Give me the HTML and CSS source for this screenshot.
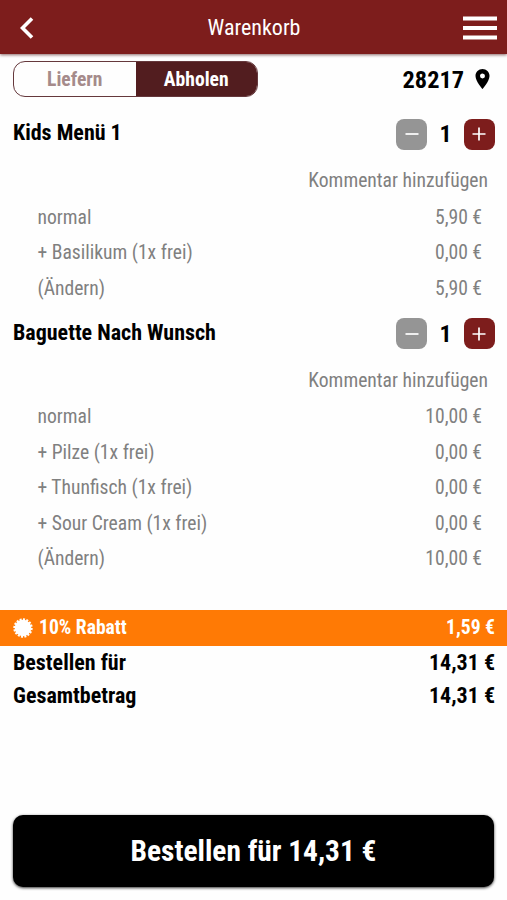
FILE: index.html
```html
<!DOCTYPE html>
<html lang="de">
<head>
    <meta charset="UTF-8">
    <meta name="viewport" content="width=device-width, initial-scale=1">
    <title>Warenkorb</title>
    <link rel="stylesheet" href="styles.css">
</head>
<body>

<!-- Header -->
<header class="header">
    <svg class="back-icon" viewBox="0 0 14 22"><path d="M12 1.500 2.500 11l9.500 9.500"/></svg>
    <h1><span class="text">Warenkorb</span></h1>
    <svg class="menu-icon" viewBox="0 0 34 24"><path d="M0 2.500h34M0 12h34M0 21.500h34"/></svg>
</header>

<!-- Delivery options -->
<div class="options">
    <div class="toggle">
        <div class="toggle-item"><span class="text">Liefern</span></div>
        <div class="toggle-item active"><span class="text">Abholen</span></div>
    </div>
    <div class="location">
        <span class="text">28217</span>
        <svg class="pin-icon" viewBox="5 2 14 20"><path d="M12 2C8.130 2 5 5.130 5 9c0 5.250 7 13 7 13s7-7.750 7-13c0-3.870-3.130-7-7-7zm0 9.500a2.500 2.500 0 0 1 0-5 2.500 2.500 0 0 1 0 5z"/></svg>
    </div>
</div>

<!-- Cart -->
<main class="cart">
    <section class="item">
        <div class="item-head">
            <h2><span class="text">Kids Menü 1</span></h2>
            <div class="counter">
                <div class="button minus"><svg viewBox="0 0 14 14"><path d="M0.500 7h13"/></svg></div>
                <span class="text count">1</span>
                <div class="button plus"><svg viewBox="0 0 14 14"><path d="M0.500 7h13M7 0.500v13"/></svg></div>
            </div>
        </div>
        <div class="comment"><span class="text">Kommentar hinzufügen</span></div>
        <div class="row"><span class="text">normal</span><span class="text">5,90 €</span></div>
        <div class="row"><span class="text">+ Basilikum (1x frei)</span><span class="text">0,00 €</span></div>
        <div class="row"><span class="text">(Ändern)</span><span class="text">5,90 €</span></div>
    </section>

    <section class="item">
        <div class="item-head">
            <h2><span class="text">Baguette Nach Wunsch</span></h2>
            <div class="counter">
                <div class="button minus"><svg viewBox="0 0 14 14"><path d="M0.500 7h13"/></svg></div>
                <span class="text count">1</span>
                <div class="button plus"><svg viewBox="0 0 14 14"><path d="M0.500 7h13M7 0.500v13"/></svg></div>
            </div>
        </div>
        <div class="comment"><span class="text">Kommentar hinzufügen</span></div>
        <div class="row"><span class="text">normal</span><span class="text">10,00 €</span></div>
        <div class="row"><span class="text">+ Pilze (1x frei)</span><span class="text">0,00 €</span></div>
        <div class="row"><span class="text">+ Thunfisch (1x frei)</span><span class="text">0,00 €</span></div>
        <div class="row"><span class="text">+ Sour Cream (1x frei)</span><span class="text">0,00 €</span></div>
        <div class="row"><span class="text">(Ändern)</span><span class="text">10,00 €</span></div>
    </section>
</main>

<!-- Totals -->
<div class="discount">
    <svg class="badge-icon" viewBox="0 0 20 20"><circle cx="10" cy="10" r="8.300"/><circle class="teeth" cx="10" cy="10" r="8.500" pathLength="32"/></svg>
    <span class="text">10% Rabatt</span>
    <span class="text amount">1,59 €</span>
</div>
<div class="total"><span class="text">Bestellen für</span><span class="text">14,31 €</span></div>
<div class="total"><span class="text">Gesamtbetrag</span><span class="text">14,31 €</span></div>

<div class="order-button"><span class="text">Bestellen für 14,31 €</span></div>

</body>
</html>
```
FILE: styles.css
```css
* {
    box-sizing: border-box;
}

body {
    margin: 0;
    height: 900px;
    display: flex;
    flex-direction: column;
    font-family: 'Roboto Condensed', Roboto, sans-serif;
    font-stretch: 75%;
    background: #fefefe;
    color: #000;
    overflow: hidden;
}

h1, h2 {
    margin: 0;
}

.text {
    white-space: nowrap;
}

/* Header */
.header {
    height: 54px;
    flex-shrink: 0;
    padding: 1px 10px 0 20px;
    display: grid;
    grid-template-columns: 34px 1fr 34px;
    align-items: center;
    background: #7d1d1c;
    color: #fff;
    box-shadow: 0 1px 3px rgba(60, 0, 0, 0.6);
}

.header h1 {
    padding-right: 9px;
    font-size: 22px;
    font-weight: 400;
    text-align: center;
}

.back-icon, .menu-icon {
    fill: none;
    stroke: #fff;
}

.back-icon {
    width: 14px;
    height: 22px;
    stroke-width: 3.6;
}

.menu-icon {
    width: 34px;
    height: 24px;
    stroke-width: 4;
}

/* Delivery options */
.options {
    height: 52.5px;
    flex-shrink: 0;
    padding: 7px 13px 0;
    display: flex;
    justify-content: space-between;
    align-items: flex-start;
}

.toggle {
    width: 245px;
    height: 36px;
    display: flex;
    border: 1px solid #65383c;
    border-radius: 12px;
    overflow: hidden;
}

.toggle-item {
    flex: 1;
    display: flex;
    justify-content: center;
    align-items: center;
    font-size: 19.6px;
    font-weight: 700;
    color: #a58b8b;
}

.toggle-item.active {
    background: #521d1f;
    color: #fff;
}

.location {
    height: 36px;
    padding-right: 4px;
    display: flex;
    align-items: center;
    gap: 11px;
    font-size: 24.3px;
    font-weight: 700;
}

.pin-icon {
    width: 15px;
    height: 20px;
}

/* Cart items */
.cart {
    height: 503px;
    flex-shrink: 0;
}

.item-head {
    height: 55px;
    padding: 0 12px 0 13px;
    display: flex;
    justify-content: space-between;
    align-items: center;
}

.item-head h2 {
    padding-bottom: 3px;
    font-size: 22px;
    font-weight: 700;
}

.counter {
    width: 99px;
    display: flex;
    justify-content: space-between;
    align-items: center;
}

.count {
    font-size: 24px;
    font-weight: 700;
}

.button {
    width: 31px;
    height: 31px;
    display: flex;
    justify-content: center;
    align-items: center;
    border-radius: 8px;
}

.button svg {
    width: 14px;
    height: 14px;
    fill: none;
    stroke: #fff;
    stroke-width: 1.7;
}

.minus {
    background: #959595;
}

.plus {
    background: #7d1d1c;
}

.comment {
    height: 38px;
    padding-right: 19px;
    display: flex;
    justify-content: flex-end;
    align-items: center;
    font-size: 19.6px;
    color: #808080;
}

.row {
    height: 35.5px;
    padding: 0 25px 0 37.5px;
    display: flex;
    justify-content: space-between;
    align-items: center;
    font-size: 19.6px;
    color: #808080;
}

/* Totals */
.discount {
    height: 36px;
    flex-shrink: 0;
    padding: 0 12px 0 13px;
    display: flex;
    align-items: center;
    background: #ff7a05;
    color: #fff;
    font-size: 19.6px;
    font-weight: 700;
}

.badge-icon {
    width: 20px;
    height: 20px;
    margin-right: 6px;
    fill: #fff;
}

.badge-icon .teeth {
    fill: none;
    stroke: #fff;
    stroke-width: 2.4;
    stroke-dasharray: 1.200 0.800;
}

.amount {
    margin-left: auto;
}

.total {
    height: 33px;
    padding: 0 12px 0 13px;
    display: flex;
    justify-content: space-between;
    align-items: center;
    font-size: 22px;
    font-weight: 700;
}

/* Order button */
.order-button {
    height: 72px;
    margin: auto 13px 13px;
    padding-bottom: 1px;
    display: flex;
    justify-content: center;
    align-items: center;
    border-radius: 10px;
    background: #000;
    color: #fff;
    font-size: 29.4px;
    font-weight: 700;
    box-shadow: 0 1px 3px rgba(0, 0, 0, 0.8);
}
```
